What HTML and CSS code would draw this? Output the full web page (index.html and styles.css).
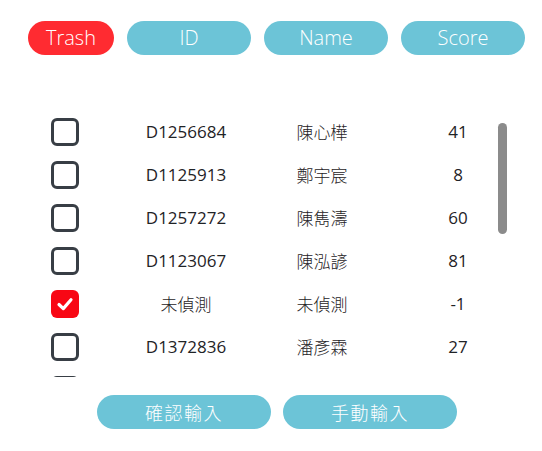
FILE: index.html
```html
<!DOCTYPE html>
<html lang="zh-Hant">
<head>
<meta charset="utf-8">
<title>Score list</title>
<link rel="stylesheet" href="styles.css">
</head>
<body>
<div class="app">
  <div class="tabs">
    <button class="pill pill-red tab-trash">Trash</button>
    <button class="pill pill-blue tab-col">ID</button>
    <button class="pill pill-blue tab-col">Name</button>
    <button class="pill pill-blue tab-col">Score</button>
  </div>

  <div class="list-wrap">
    <div class="list">
      <div class="row"><span class="box"></span><span class="cell">D1256684</span><span class="cell cjk">陳心樺</span><span class="cell">41</span></div>
      <div class="row"><span class="box"></span><span class="cell">D1125913</span><span class="cell cjk">鄭宇宸</span><span class="cell">8</span></div>
      <div class="row"><span class="box"></span><span class="cell">D1257272</span><span class="cell cjk">陳雋濤</span><span class="cell">60</span></div>
      <div class="row"><span class="box"></span><span class="cell">D1123067</span><span class="cell cjk">陳泓諺</span><span class="cell">81</span></div>
      <div class="row"><span class="box box-checked"><svg viewBox="0 0 28 28" width="28" height="28"><path d="M8 14.5 L12.3 18.6 L20 9.8" fill="none" stroke="#fff" stroke-width="3.2" stroke-linecap="round" stroke-linejoin="round"/></svg></span><span class="cell cjk">未偵測</span><span class="cell cjk">未偵測</span><span class="cell">-1</span></div>
      <div class="row"><span class="box"></span><span class="cell">D1372836</span><span class="cell cjk">潘彥霖</span><span class="cell">27</span></div>
      <div class="row"><span class="box"></span></div>
    </div>
    <div class="scroll-thumb"></div>
  </div>

  <div class="actions">
    <button class="pill pill-blue action cjk">確認輸入</button>
    <button class="pill pill-blue action cjk">手動輸入</button>
  </div>
</div>
</body>
</html>
```

FILE: styles.css
```css
html, body {
  margin: 0;
  padding: 0;
  background: #ffffff;
}

body {
  font-family: "Open Sans", "Noto Sans CJK TC", sans-serif;
  font-weight: 400;
  color: #1f2326;
}

.app {
  width: 542px;
}

.tabs {
  display: flex;
  gap: 13px;
  padding: 21px 0 0 28px;
}

.pill {
  border: none;
  margin: 0;
  padding: 0;
  height: 34px;
  border-radius: 17px;
  color: #ffffff;
  font-family: "Open Sans", "Noto Sans CJK TC", sans-serif;
  font-weight: 300;
  font-size: 20px;
  line-height: 34px;
  text-align: center;
}

.pill-red {
  background: #ff2b31;
}

.pill-blue {
  background: #6cc4d7;
}

.tab-trash {
  width: 86px;
}

.tab-col {
  width: 124px;
}

.list-wrap {
  position: relative;
  margin-top: 55px;
  height: 267px;
  overflow: hidden;
}

.list {
  padding-left: 51px;
}

.row {
  display: grid;
  grid-template-columns: 67px repeat(3, 136px);
  align-items: center;
  height: 43px;
  font-size: 17px;
}

.cell {
  text-align: center;
  line-height: 22px;
}

.cjk {
  font-family: "Noto Sans CJK TC", sans-serif;
  font-weight: 300;
  font-size: 17px;
}

.box {
  box-sizing: border-box;
  width: 28px;
  height: 28px;
  border: 3px solid #383e45;
  border-radius: 6px;
  background: #ffffff;
}

.box-checked {
  border: none;
  background: #f80714;
  display: block;
}

.box-checked svg {
  display: block;
}

.scroll-thumb {
  position: absolute;
  left: 498px;
  top: 13px;
  width: 9px;
  height: 111px;
  border-radius: 5px;
  background: #8b8b8b;
}

.actions {
  display: flex;
  gap: 12px;
  padding: 18px 0 0 97px;
}

.action {
  width: 174px;
  font-size: 18px;
  letter-spacing: 1.5px;
}
```
